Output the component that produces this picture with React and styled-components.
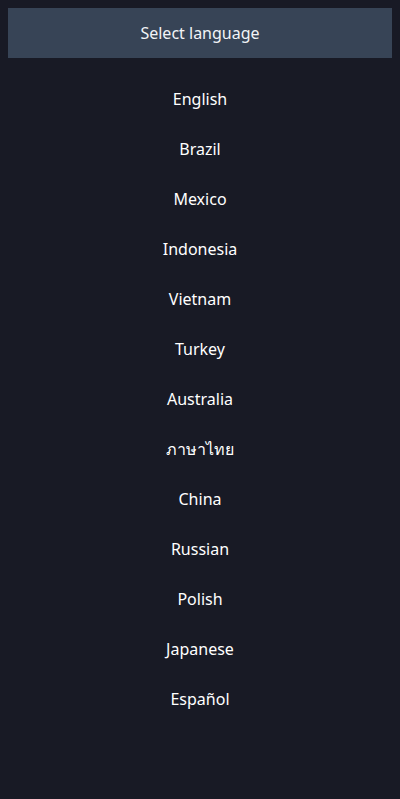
import React from "react";
import styled, { createGlobalStyle } from "styled-components";

const Global = createGlobalStyle`
  html, body { margin: 0; padding: 0; background: #181a25; }
  body { font-family: "Segoe UI", "Noto Sans", "Open Sans", sans-serif; }
`;

const Page = styled.div`
  min-height: 799px;
  padding: 8px;
  box-sizing: border-box;
  background: #181a25;
`;

const Header = styled.div`
  height: 50px;
  background: #374456;
  color: #f2f4f7;
  display: flex;
  align-items: center;
  justify-content: center;
  font-size: 16px;
`;

const List = styled.ul`
  list-style: none;
  margin: 0;
  padding: 16px 0 0;
  display: flex;
  flex-direction: column;
`;

const Item = styled.li`
  height: 50px;
  display: flex;
  align-items: center;
  justify-content: center;
  color: #ffffff;
  font-size: 16px;
  cursor: pointer;
`;

const langs = [
  "English",
  "Brazil",
  "Mexico",
  "Indonesia",
  "Vietnam",
  "Turkey",
  "Australia",
  "ภาษาไทย",
  "China",
  "Russian",
  "Polish",
  "Japanese",
  "Español",
];

export default function App() {
  return (
    <>
      <Global />
      <Page>
        <Header>Select language</Header>
        <List>
          {langs.map((l) => (
            <Item key={l}>{l}</Item>
          ))}
        </List>
      </Page>
    </>
  );
}
